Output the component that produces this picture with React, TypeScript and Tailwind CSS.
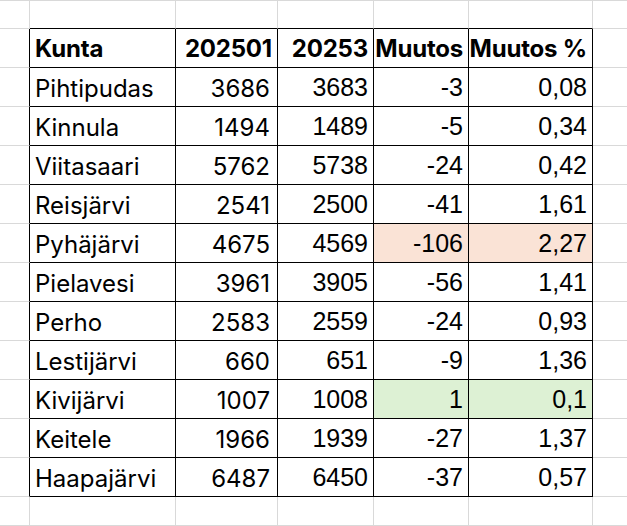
import React from "react";

type Row = {
  name: string;
  a: string;
  b: string;
  diff: string;
  pct: string;
  fill?: "red" | "green";
};

const rows: Row[] = [
  { name: "Pihtipudas", a: "3686", b: "3683", diff: "-3", pct: "0,08" },
  { name: "Kinnula", a: "1494", b: "1489", diff: "-5", pct: "0,34" },
  { name: "Viitasaari", a: "5762", b: "5738", diff: "-24", pct: "0,42" },
  { name: "Reisjärvi", a: "2541", b: "2500", diff: "-41", pct: "1,61" },
  { name: "Pyhäjärvi", a: "4675", b: "4569", diff: "-106", pct: "2,27", fill: "red" },
  { name: "Pielavesi", a: "3961", b: "3905", diff: "-56", pct: "1,41" },
  { name: "Perho", a: "2583", b: "2559", diff: "-24", pct: "0,93" },
  { name: "Lestijärvi", a: "660", b: "651", diff: "-9", pct: "1,36" },
  { name: "Kivijärvi", a: "1007", b: "1008", diff: "1", pct: "0,1", fill: "green" },
  { name: "Keitele", a: "1966", b: "1939", diff: "-27", pct: "1,37" },
  { name: "Haapajärvi", a: "6487", b: "6450", diff: "-37", pct: "0,57" },
];

const header = ["Kunta", "202501", "20253", "Muutos", "Muutos %"];

// r: 0 = blank row above, 1 = header, 2..12 = data, 13+ = blank rows below
// c: 0 = column A, 1..5 = table, 6 = column G
const cellBorders = (r: number, c: number) => {
  const inTableRow = r >= 1 && r <= 12;
  const inTableCol = c >= 1 && c <= 5;
  const bottomDark = inTableCol && r >= 0 && r <= 12;
  const rightDark = inTableRow && c >= 0 && c <= 5;
  return [
    bottomDark ? "border-b border-b-black" : "border-b border-b-[#d9d9d9]",
    rightDark ? "border-r border-r-black" : "border-r border-r-[#d9d9d9]",
    r === 0 ? "border-t border-t-[#d9d9d9]" : "",
  ].join(" ");
};

const Cell: React.FC<{
  r: number;
  c: number;
  children?: React.ReactNode;
  className?: string;
}> = ({ r, c, children, className = "" }) => (
  <div className={`flex items-center overflow-hidden whitespace-nowrap ${cellBorders(r, c)} ${className}`}>
    {children}
  </div>
);

const sans = "font-['Liberation_Sans',Arial,sans-serif] text-[25px] justify-end pr-[5px]";
const aptos = "font-['Inter',sans-serif] text-[24px]";

export default function App() {
  const bodyRows = rows.map((row, i) => {
    const r = i + 2;
    const fillClass =
      row.fill === "red" ? "bg-[#fae3d6]" : row.fill === "green" ? "bg-[#ddf1d4]" : "";
    return (
      <React.Fragment key={row.name}>
        <Cell r={r} c={0} />
        <Cell r={r} c={1} className={`${aptos} pl-[5px] pt-[3px]`}>
          {row.name}
        </Cell>
        <Cell r={r} c={2} className={`${aptos} justify-end pr-[7px] pt-[3px]`}>
          {row.a}
        </Cell>
        <Cell r={r} c={3} className={`${sans} pt-[2px]`}>
          {row.b}
        </Cell>
        <Cell r={r} c={4} className={`${sans} pt-[2px] ${fillClass}`}>
          {row.diff}
        </Cell>
        <Cell r={r} c={5} className={`${sans} pt-[2px] ${fillClass}`}>
          {row.pct}
        </Cell>
        <Cell r={r} c={6} />
      </React.Fragment>
    );
  });

  return (
    <div className="w-[627px] h-[526px] overflow-hidden bg-white text-black">
      <div className="grid grid-cols-[30px_146px_102px_96px_95px_124px_60px] grid-rows-[29px_repeat(12,39px)_29px_29px]">
        {/* blank top row */}
        {[0, 1, 2, 3, 4, 5, 6].map((c) => (
          <Cell key={`top-${c}`} r={0} c={c} />
        ))}

        {/* header */}
        <Cell r={1} c={0} />
        {header.map((h, i) => (
          <Cell
            key={h}
            r={1}
            c={i + 1}
            className={`font-['Inter',sans-serif] text-[24px] font-bold tracking-[-0.2px] pt-[2px] ${
              i === 0 ? "pl-[5px]" : "justify-end pr-[5px]"
            }`}
          >
            {h}
          </Cell>
        ))}
        <Cell r={1} c={6} />

        {bodyRows}

        {/* blank rows below */}
        {[13, 14].map((r) =>
          [0, 1, 2, 3, 4, 5, 6].map((c) => <Cell key={`b-${r}-${c}`} r={r} c={c} />)
        )}
      </div>
    </div>
  );
}
